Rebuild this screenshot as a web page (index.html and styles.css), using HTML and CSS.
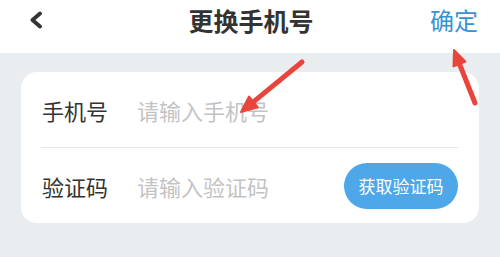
FILE: index.html
```html
<!DOCTYPE html>
<html lang="zh-CN">
<head>
<meta charset="utf-8">
<title>更换手机号</title>
<link rel="stylesheet" href="styles.css">
</head>
<body>
<div class="page">
  <header class="topbar">
    <div class="back">
      <svg width="16" height="18" viewBox="0 0 16 18"><path d="M12 2.5 L4.5 9 L12 15.5" fill="none" stroke="#343434" stroke-width="3.8" stroke-linecap="round" stroke-linejoin="round"/></svg>
    </div>
    <div class="title">更换手机号</div>
    <div class="confirm">确定</div>
  </header>
  <main class="content">
    <section class="card">
      <div class="row">
        <div class="label">手机号</div>
        <div class="field">请输入手机号</div>
      </div>
      <div class="row">
        <div class="label">验证码</div>
        <div class="field">请输入验证码</div>
        <button class="code-btn">获取验证码</button>
      </div>
    </section>
  </main>
  <svg class="annot" width="500" height="257" viewBox="0 0 500 257">
    <line x1="302" y1="62" x2="253.4" y2="101.9" stroke="#e8453c" stroke-width="5" stroke-linecap="round"/>
    <polygon points="241,112 257.8,107.3 249,96.5" fill="#e8453c" stroke="#e8453c" stroke-width="2" stroke-linejoin="round"/>
    <line x1="475" y1="103" x2="459.5" y2="64" stroke="#e8453c" stroke-width="5" stroke-linecap="round"/>
    <polygon points="454,50 465.5,61.6 453.5,66.4" fill="#e8453c" stroke="#e8453c" stroke-width="2" stroke-linejoin="round"/>
  </svg>
</div>
</body>
</html>
```

FILE: styles.css
```css
* { box-sizing: border-box; }
html, body { margin: 0; padding: 0; }
body {
  background: #eaedef;
  font-family: "Noto Sans CJK SC", "Noto Sans", sans-serif;
  width: 500px;
  height: 257px;
  overflow: hidden;
}
.page { position: relative; width: 500px; height: 257px; }
.topbar {
  height: 53px;
  background: #ffffff;
  display: grid;
  grid-template-columns: 1fr auto 1fr;
  align-items: start;
  padding: 0 22px 0 28px;
}
.back { height: 40px; display: flex; align-items: center; }
.back svg { display: block; }
.title {
  height: 40px;
  line-height: 40px;
  font-size: 25px;
  font-weight: 700;
  color: #333333;
  margin-right: 4px;
}
.confirm {
  height: 40px;
  line-height: 40px;
  font-size: 24px;
  color: #3a93d0;
  justify-self: end;
}
.content { padding: 19px 21px 0; }
.card {
  background: #ffffff;
  border-radius: 16px;
  padding: 0 21px 0 20px;
}
.row {
  height: 75px;
  display: flex;
  align-items: center;
}
.row + .row { border-top: 1px solid #e6e6e6; height: 76px; }
.label {
  width: 96px;
  font-size: 22px;
  color: #333333;
  padding-left: 1px;
}
.field {
  flex: 1;
  font-size: 22px;
  color: #c3c3c3;
}
.code-btn {
  width: 114px;
  height: 46px;
  border: none;
  border-radius: 23px;
  background: #4ea7e9;
  color: #ffffff;
  font-family: "Noto Sans CJK SC", "Noto Sans", sans-serif;
  font-size: 17px;
  padding: 0;
}
.annot { position: absolute; left: 0; top: 0; pointer-events: none; }
```
